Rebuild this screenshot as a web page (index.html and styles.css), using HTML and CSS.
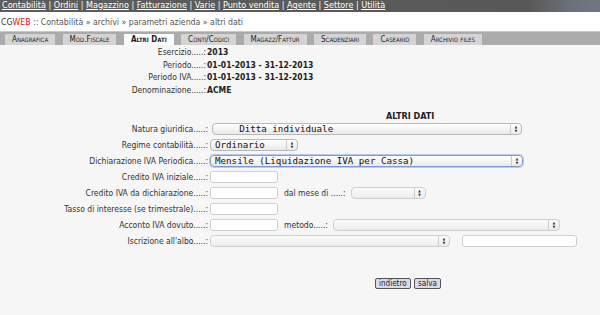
FILE: index.html
```html
<!DOCTYPE html>
<html lang="it">
<head>
  <meta charset="UTF-8">
  <title>CGWEB - altri dati</title>
  <link rel="stylesheet" href="styles.css">
</head>
<body>
  <div class="topmenu">
    <a href="#">Contabilità</a> | <a href="#">Ordini</a> | <a href="#">Magazzino</a> | <a href="#">Fatturazione</a> | <a href="#">Varie</a> | <a href="#">Punto vendita</a> | <a href="#">Agente</a> | <a href="#">Settore</a> | <a href="#">Utilità</a>
  </div>
  <div class="crumbs"><span class="cg">CG</span><span class="web">WEB</span> :: Contabilità » archivi » parametri azienda » altri dati</div>

  <div class="tabs">
    <span class="tab">Anagrafica</span>
    <span class="tab">Mod.Fiscale</span>
    <span class="tab active">Altri Dati</span>
    <span class="tab">Conti/Codici</span>
    <span class="tab">Magazz/Fattur</span>
    <span class="tab">Scadenziari</span>
    <span class="tab">Caseario</span>
    <span class="tab">Archivio files</span>
  </div>

  <table class="info">
    <tr><td class="lbl">Esercizio.....:</td><td class="val">2013</td></tr>
    <tr><td class="lbl">Periodo.....:</td><td class="val">01-01-2013 - 31-12-2013</td></tr>
    <tr><td class="lbl">Periodo IVA.....:</td><td class="val">01-01-2013 - 31-12-2013</td></tr>
    <tr><td class="lbl">Denominazione.....:</td><td class="val">ACME</td></tr>
  </table>

  <div class="title">ALTRI DATI</div>

  <table class="form">
    <tr>
      <td class="lbl">Natura giuridica.....:</td>
      <td><span class="sel w310"><span class="txt">&nbsp;&nbsp;&nbsp;&nbsp;Ditta individuale</span><span class="arr">&#9650;<br>&#9660;</span></span></td>
    </tr>
    <tr>
      <td class="lbl">Regime contabilità.....:</td>
      <td><span class="sel w88"><span class="txt">Ordinario</span><span class="arr">&#9650;<br>&#9660;</span></span></td>
    </tr>
    <tr>
      <td class="lbl">Dichiarazione IVA Periodica.....:</td>
      <td><span class="sel w313 focus"><span class="txt">Mensile (Liquidazione IVA per Cassa)</span><span class="arr">&#9650;<br>&#9660;</span></span></td>
    </tr>
    <tr>
      <td class="lbl">Credito IVA iniziale.....:</td>
      <td><span class="inp"></span></td>
    </tr>
    <tr>
      <td class="lbl">Credito IVA da dichiarazione.....:</td>
      <td class="line">
        <span class="inp"></span>
        <span class="sub">dal mese di .....:</span>
        <span class="sel w75 light"><span class="txt"></span><span class="arr">&#9650;<br>&#9660;</span></span>
      </td>
    </tr>
    <tr>
      <td class="lbl">Tasso di interesse (se trimestrale).....:</td>
      <td><span class="inp"></span></td>
    </tr>
    <tr>
      <td class="lbl">Acconto IVA dovuto.....:</td>
      <td class="line">
        <span class="inp"></span>
        <span class="sub">metodo.....:</span>
        <span class="sel w227 light"><span class="txt"></span><span class="arr">&#9650;<br>&#9660;</span></span>
      </td>
    </tr>
    <tr>
      <td class="lbl">Iscrizione all'albo.....:</td>
      <td class="line">
        <span class="sel w240 light"><span class="txt"></span><span class="arr">&#9650;<br>&#9660;</span></span>
        <span class="inp wide"></span>
      </td>
    </tr>
  </table>

  <div class="buttons">
    <button class="btn">indietro</button>
    <button class="btn">salva</button>
  </div>
</body>
</html>
```

FILE: styles.css
```css
body {
  margin: 0;
  padding: 0;
  background-color: #f6f6f6;
  font-family: "DejaVu Sans Condensed", "DejaVu Sans", sans-serif;
  font-size: 8.5px;
  color: #333;
}
.topmenu {
  height: 12px;
  line-height: 11px;
  padding-left: 2px;
  background: linear-gradient(to right, #5d5d5d 0%, #585858 88%, #6b7178 95%, #707780 100%);
  font-size: 9px;
  color: #fff;
  white-space: nowrap;
}
.topmenu a {
  color: #fff;
  text-decoration: underline;
}
.crumbs {
  height: 19px;
  line-height: 21px;
  padding-left: 1px;
  background: #fff;
  font-size: 8.7px;
  color: #555;
}
.crumbs .cg {
  color: #333;
}
.crumbs .web {
  color: #e01010;
}
.tabs {
  height: 14px;
  padding: 2px 0 0 5px;
  background: #ababab;
  border-top: 1px solid #c8c8c8;
  box-sizing: border-box;
  white-space: nowrap;
}
.tab {
  display: inline-block;
  height: 11px;
  line-height: 11px;
  padding: 0 7px;
  margin-right: 5px;
  background: #d4d4d4;
  font-variant: small-caps;
  font-size: 8px;
  color: #222;
  vertical-align: top;
}
.tab.active {
  background: #fbfbfb;
  font-weight: bold;
}
.info {
  border-collapse: collapse;
  margin-top: 1px;
}
.info td {
  padding: 0;
  height: 12.5px;
  line-height: 12px;
}
.info .lbl {
  width: 206px;
  text-align: right;
}
.info .val {
  padding-left: 1px;
  font-weight: bold;
  color: #222;
}
.title {
  padding: 15px 0 0 386px;
  font-weight: bold;
  font-size: 9px;
  color: #222;
}
.form {
  border-collapse: collapse;
  margin-top: 0;
}
.form td {
  padding: 0;
  height: 16px;
  vertical-align: middle;
  white-space: nowrap;
}
.form .lbl {
  width: 208px;
  text-align: right;
  padding-right: 2px;
}
.line {
  display: flex;
  align-items: center;
  gap: 5px;
}
.sub {
  padding-left: 1px;
}
.sel {
  position: relative;
  display: inline-block;
  height: 12px;
  box-sizing: border-box;
  border: 1px solid #b8b8b8;
  border-radius: 4px;
  background: linear-gradient(#ffffff, #e9e9e9);
  vertical-align: middle;
}
.sel.light {
  border-color: #cfcfcf;
  background: linear-gradient(#fbfbfb, #ececec);
}
.sel.focus {
  border: 1px solid #7f9bd4;
  box-shadow: 0 0 0 1px #b9c9ec;
}
.sel .txt {
  display: block;
  padding-left: 4px;
  line-height: 10px;
  font-family: "DejaVu Sans Mono", monospace;
  font-size: 9.2px;
  color: #111;
}
.sel .arr {
  position: absolute;
  top: 0;
  right: 0;
  width: 11px;
  height: 10px;
  border-left: 1px solid #cccccc;
  font-size: 3.5px;
  line-height: 4px;
  text-align: center;
  padding-top: 1px;
  box-sizing: border-box;
  color: #222;
}
.w310 { width: 310px; margin-left: 2px; }
.w88 { width: 88px; }
.w313 { width: 313px; }
.w75 { width: 75px; }
.w227 { width: 227px; }
.w240 { width: 240px; }
.inp {
  display: inline-block;
  width: 68px;
  height: 12px;
  box-sizing: border-box;
  border: 1px solid #cfcfcf;
  border-radius: 3px;
  background: #fff;
  vertical-align: middle;
}
.inp.wide {
  width: 115px;
  margin-left: 7px;
}
.buttons {
  padding: 29px 0 0 375px;
}
.btn {
  height: 11px;
  padding: 0 3px;
  margin: 0 1px 0 0;
  border: 1px solid #555;
  border-radius: 2px;
  background: #d9dbea;
  font-family: "DejaVu Sans Condensed", "DejaVu Sans", sans-serif;
  font-size: 8px;
  line-height: 8px;
  color: #222;
  vertical-align: top;
}
```
